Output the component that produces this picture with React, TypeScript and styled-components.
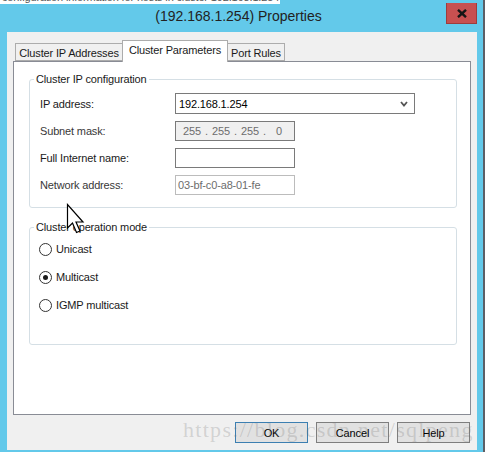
import React from "react";
import styled, { createGlobalStyle } from "styled-components";

const Global = createGlobalStyle`
  html, body { margin: 0; padding: 0; background: #63c9ea; }
  body { width: 485px; height: 452px; overflow: hidden; }
  * { box-sizing: border-box; }
`;

const UI_FONT = `"Liberation Sans", Arial, sans-serif`;

const Window = styled.div`
  position: relative;
  width: 485px;
  height: 452px;
  background: #63c9ea;
  border-right: 2px solid #5c5f66;
  display: flex;
  flex-direction: column;
  font-family: ${UI_FONT};
  font-size: 11px;
  letter-spacing: -0.15px;
  color: #1a1a1a;
`;

const Backdrop = styled.div`
  position: absolute;
  left: 0;
  top: 0;
  width: 280px;
  height: 4px;
  background: #fff;
  overflow: hidden;
  color: #555;
  font-size: 11px;
  line-height: 12px;
  white-space: nowrap;
  & > span { display: block; margin-top: -9px; padding-left: 2px; }
`;

const TitleBar = styled.div`
  height: 32px;
  display: grid;
  grid-template-columns: 1fr auto 1fr;
  align-items: center;
  padding-right: 6px;
`;

const TitleText = styled.div`
  grid-column: 2;
  font-size: 14px;
  letter-spacing: 0;
  color: #222;
`;

const CloseButton = styled.div`
  grid-column: 3;
  justify-self: end;
  align-self: start;
  margin-top: 3px;
  width: 31px;
  height: 21px;
  background: #c75050;
  border: 1px solid #9e3c3c;
  border-top: none;
  display: flex;
  align-items: center;
  justify-content: center;
`;

const Body = styled.div`
  flex: 1;
  margin: 0 6px 2px 7px;
  background: #f0f0f0;
  display: flex;
  flex-direction: column;
  padding: 8px 6px 0 6px;
`;

const TabRow = styled.div`
  display: flex;
  align-items: flex-end;
  height: 22px;
  padding-left: 2px;
  margin-bottom: -1px;
  position: relative;
  z-index: 1;
`;

const Tab = styled.div<{ $active?: boolean; $w: number }>`
  width: ${(p) => p.$w}px;
  height: ${(p) => (p.$active ? 22 : 18)}px;
  margin-bottom: ${(p) => (p.$active ? 0 : 1)}px;
  margin-left: ${(p) => (p.$active ? -1 : 0)}px;
  margin-right: ${(p) => (p.$active ? -1 : 0)}px;
  background: ${(p) => (p.$active ? "#fff" : "#f0f0f0")};
  border: 1px solid #acacac;
  border-bottom-width: ${(p) => (p.$active ? 0 : 1)}px;
  display: flex;
  align-items: ${(p) => (p.$active ? "flex-start" : "center")};
  justify-content: center;
  padding-top: ${(p) => (p.$active ? 3 : 1)}px;
  font-size: 11px;
  z-index: ${(p) => (p.$active ? 2 : 1)};
  white-space: nowrap;
`;

const Panel = styled.div`
  height: 354px;
  background: #fff;
  border: 1px solid #898c95;
  padding: 10px 13px 0 15px;
  display: flex;
  flex-direction: column;
  gap: 12px;
`;

const Group = styled.fieldset<{ $h: number; $pt: number }>`
  margin: 0;
  padding: ${(p) => p.$pt}px 0 0 0;
  height: ${(p) => p.$h}px;
  border: 1px solid #d5dfe5;
  border-radius: 3px;
  min-width: 0;
`;

const Legend = styled.legend`
  margin-left: 4px;
  padding: 0 2px;
  font-size: 11px;
  line-height: 14px;
  color: #1a1a1a;
`;

const FieldGrid = styled.div`
  display: grid;
  grid-template-columns: 135px auto;
  row-gap: 7px;
  padding-left: 10px;
  align-items: center;
`;

const Label = styled.div<{ $muted?: boolean }>`
  color: ${(p) => (p.$muted ? "#383838" : "#1a1a1a")};
`;

const Box = styled.div<{ $w: number; $h?: number; $border?: string; $bg?: string; $color?: string }>`
  width: ${(p) => p.$w}px;
  height: ${(p) => p.$h ?? 20}px;
  border: 1px solid ${(p) => p.$border ?? "#7a7a7a"};
  background: ${(p) => p.$bg ?? "#fff"};
  color: ${(p) => p.$color ?? "#000"};
  display: flex;
  align-items: center;
  padding-left: 3px;
  white-space: nowrap;
`;

const ComboText = styled.span`
  flex: 1;
`;

const Chevron = styled.svg`
  margin-right: 6px;
`;

const Octet = styled.span`
  width: 22px;
  text-align: center;
`;

const Dot = styled.span`
  width: 7px;
  text-align: center;
`;

const RadioList = styled.div`
  display: flex;
  flex-direction: column;
  gap: 12px;
  padding: 7px 0 0 9px;
`;

const RadioRow = styled.label`
  display: flex;
  align-items: center;
  gap: 4px;
  height: 16px;
`;

const RadioCircle = styled.span<{ $checked?: boolean }>`
  width: 13px;
  height: 13px;
  border-radius: 50%;
  border: 1px solid #333;
  background: #fff;
  display: flex;
  align-items: center;
  justify-content: center;
  &::after {
    content: "";
    width: 5px;
    height: 5px;
    border-radius: 50%;
    background: ${(p) => (p.$checked ? "#1a1a1a" : "transparent")};
  }
`;

const ButtonRow = styled.div`
  display: flex;
  justify-content: flex-end;
  gap: 8px;
  margin-top: 7px;
  padding-right: 1px;
`;

const Button = styled.div<{ $default?: boolean }>`
  width: 73px;
  height: 21px;
  background: #e1e1e1;
  border: 1px solid ${(p) => (p.$default ? "#3c7fb1" : "#7e7e7e")};
  display: flex;
  align-items: center;
  justify-content: center;
  color: #000;
`;

const Watermark = styled.div`
  position: absolute;
  left: 183px;
  top: 419px;
  font-family: "Liberation Serif", "Times New Roman", serif;
  font-size: 22px;
  letter-spacing: 1.3px;
  line-height: 22px;
  color: rgba(110, 110, 110, 0.24);
  pointer-events: none;
  white-space: nowrap;
`;

const Cursor = styled.svg`
  position: absolute;
  left: 66px;
  top: 203px;
  pointer-events: none;
`;

export default function App() {
  return (
    <>
      <Global />
      <Window>
        <Backdrop>
          <span>configuration information for hosts in cluster 192.168.1.254</span>
        </Backdrop>
        <TitleBar>
          <TitleText>(192.168.1.254) Properties</TitleText>
          <CloseButton>
            <svg width="10" height="9" viewBox="0 0 10 9">
              <path d="M1 0.8 L9 8.2 M9 0.8 L1 8.2" stroke="#151515" strokeWidth="2.4" />
            </svg>
          </CloseButton>
        </TitleBar>
        <Body>
          <TabRow>
            <Tab $w={108}>Cluster IP Addresses</Tab>
            <Tab $w={106} $active>Cluster Parameters</Tab>
            <Tab $w={58}>Port Rules</Tab>
          </TabRow>
          <Panel>
            <Group $h={136} $pt={7}>
              <Legend>Cluster IP configuration</Legend>
              <FieldGrid>
                <Label>IP address:</Label>
                <Box $w={240} $h={21}>
                  <ComboText>192.168.1.254</ComboText>
                  <Chevron width="8" height="6" viewBox="0 0 8 6">
                    <path d="M1 1 L4 4.5 L7 1" stroke="#555" strokeWidth="1.8" fill="none" />
                  </Chevron>
                </Box>
                <Label $muted>Subnet mask:</Label>
                <Box $w={120} $bg="#f0f0f0" $color="#6d6d6d" style={{ paddingLeft: 5 }}>
                  <Octet>255</Octet>
                  <Dot>.</Dot>
                  <Octet>255</Octet>
                  <Dot>.</Dot>
                  <Octet>255</Octet>
                  <Dot>.</Dot>
                  <Octet>0</Octet>
                </Box>
                <Label>Full Internet name:</Label>
                <Box $w={120} />
                <Label $muted>Network address:</Label>
                <Box $w={120} $border="#bcbcbc" $color="#6d6d6d" style={{ paddingLeft: 2 }}>
                  03-bf-c0-a8-01-fe
                </Box>
              </FieldGrid>
            </Group>
            <Group $h={125} $pt={0}>
              <Legend>Cluster operation mode</Legend>
              <RadioList>
                <RadioRow>
                  <RadioCircle />
                  Unicast
                </RadioRow>
                <RadioRow>
                  <RadioCircle $checked />
                  Multicast
                </RadioRow>
                <RadioRow>
                  <RadioCircle />
                  IGMP multicast
                </RadioRow>
              </RadioList>
            </Group>
          </Panel>
          <ButtonRow>
            <Button $default>OK</Button>
            <Button>Cancel</Button>
            <Button>Help</Button>
          </ButtonRow>
        </Body>
        <Watermark>https://blog.csdn.net/sqlpeng</Watermark>
        <Cursor width="19" height="32" viewBox="0 0 19 32">
          <path
            d="M1.5 1.5 L1.5 25 L6.5 20 L10.5 29.5 L14 28 L10 19 L17 19 Z"
            fill="#fff"
            stroke="#000"
            strokeWidth="1.2"
            strokeLinejoin="miter"
          />
        </Cursor>
      </Window>
    </>
  );
}
